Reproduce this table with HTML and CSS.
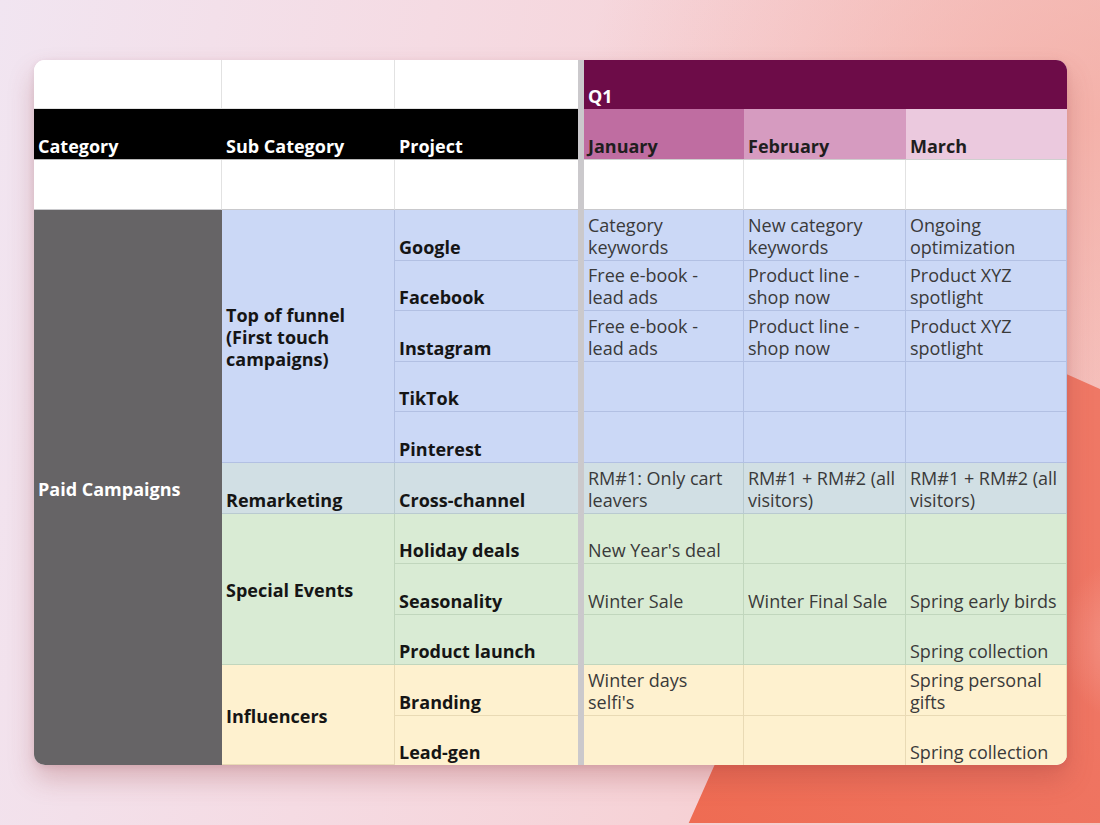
FILE: index.html
```html
<!DOCTYPE html>
<html lang="en">
<head>
<meta charset="utf-8">
<title>Paid Campaigns – Q1 plan</title>
<link rel="stylesheet" href="styles.css">
</head>
<body>
<div class="backdrop"><div class="blob"></div><div class="glow"></div></div>
<main class="stage">
  <div class="sheet">
    <div class="divider"></div>

    <div class="c blank"></div>
    <div class="c blank"></div>
    <div class="c blank edge"></div>
    <div class="c q1">Q1</div>

    <div class="c hd">Category</div>
    <div class="c hd">Sub Category</div>
    <div class="c hd edge">Project</div>
    <div class="c mh jan">January</div>
    <div class="c mh feb">February</div>
    <div class="c mh mar">March</div>

    <div class="c blank gap"></div>
    <div class="c blank gap"></div>
    <div class="c blank gap edge"></div>
    <div class="c blank gap"></div>
    <div class="c blank gap"></div>
    <div class="c blank gap"></div>

    <div class="c cat">Paid Campaigns</div>
    <div class="c sub blue span5">Top of funnel (First touch campaigns)</div>
    <div class="c proj blue edge">Google</div>
    <div class="c txt blue">Category keywords</div>
    <div class="c txt blue">New category keywords</div>
    <div class="c txt blue">Ongoing optimization</div>

    <div class="c proj blue edge">Facebook</div>
    <div class="c txt blue">Free e-book - lead ads</div>
    <div class="c txt blue">Product line - shop now</div>
    <div class="c txt blue">Product XYZ spotlight</div>

    <div class="c proj blue edge">Instagram</div>
    <div class="c txt blue">Free e-book - lead ads</div>
    <div class="c txt blue">Product line - shop now</div>
    <div class="c txt blue">Product XYZ spotlight</div>

    <div class="c proj blue edge">TikTok</div>
    <div class="c txt blue"></div>
    <div class="c txt blue"></div>
    <div class="c txt blue"></div>

    <div class="c proj blue edge">Pinterest</div>
    <div class="c txt blue"></div>
    <div class="c txt blue"></div>
    <div class="c txt blue"></div>

    <div class="c proj cyan">Remarketing</div>
    <div class="c proj cyan edge">Cross-channel</div>
    <div class="c txt cyan">RM#1: Only cart leavers</div>
    <div class="c txt cyan">RM#1 + RM#2 (all visitors)</div>
    <div class="c txt cyan">RM#1 + RM#2 (all visitors)</div>

    <div class="c sub green span3">Special Events</div>
    <div class="c proj green edge">Holiday deals</div>
    <div class="c txt green">New Year's deal</div>
    <div class="c txt green"></div>
    <div class="c txt green"></div>

    <div class="c proj green edge">Seasonality</div>
    <div class="c txt green">Winter Sale</div>
    <div class="c txt green">Winter Final Sale</div>
    <div class="c txt green">Spring early birds</div>

    <div class="c proj green edge">Product launch</div>
    <div class="c txt green"></div>
    <div class="c txt green"></div>
    <div class="c txt green">Spring collection</div>

    <div class="c sub yellow span2">Influencers</div>
    <div class="c proj yellow edge">Branding</div>
    <div class="c txt yellow">Winter days selfi's</div>
    <div class="c txt yellow"></div>
    <div class="c txt yellow">Spring personal gifts</div>

    <div class="c proj yellow edge last">Lead-gen</div>
    <div class="c txt yellow last"></div>
    <div class="c txt yellow last"></div>
    <div class="c txt yellow last">Spring collection</div>
  </div>
</main>
</body>
</html>
```

FILE: styles.css
```css
* { box-sizing: border-box; }

html, body {
  margin: 0;
  padding: 0;
  width: 1100px;
  height: 825px;
  overflow: hidden;
}

body {
  position: relative;
  font-family: "Open Sans", "Noto Sans", "DejaVu Sans", sans-serif;
  background:
    radial-gradient(ellipse 520px 420px at 1100px 120px, rgba(244, 170, 160, 0.75), rgba(244, 170, 160, 0) 100%),
    linear-gradient(100deg, #f1e5f1 0%, #f5dbe3 35%, #f6d2d6 65%, #f5c4c0 100%);
}

.backdrop {
  position: absolute;
  inset: 0 0 2px 0;
  overflow: hidden;
}

.blob {
  position: absolute;
  left: 918px;
  top: 308px;
  width: 900px;
  height: 900px;
  transform-origin: 0 0;
  transform: rotate(24deg);
  border-radius: 120px;
  background: linear-gradient(205deg, #ef7b67 0%, #ef7664 40%, #ee6446 100%);
}

.glow {
  position: absolute;
  left: 1060px;
  top: 560px;
  width: 120px;
  height: 160px;
  border-radius: 50%;
  background: radial-gradient(ellipse at center, rgba(246, 170, 160, 0.55), rgba(246, 170, 160, 0) 70%);
}

.stage {
  position: relative;
  padding: 60px 0 0 34px;
}

.sheet {
  width: 1033px;
  display: grid;
  grid-template-columns: 188px 173px 183px 6px 160px 162px 161px;
  grid-template-rows: 49px 51px 50px 51px 50px 51px 50px 51px 51px 50px 51px 50px 51px 49px;
  border-radius: 11px;
  overflow: hidden;
  background: #fff;
  box-shadow: 0 14px 26px rgba(150, 60, 60, 0.28), 0 2px 6px rgba(120, 60, 80, 0.12);
}

.divider {
  grid-column: 4;
  grid-row: 1 / span 14;
  background: #cbc9cc;
}

.c {
  display: flex;
  align-items: flex-end;
  padding: 0 6px 2px 4px;
  font-size: 18px;
  line-height: 22px;
  color: #3b3b3b;
  border-right: 1px solid rgba(0, 0, 0, 0.09);
  border-bottom: 1px solid rgba(0, 0, 0, 0.09);
  overflow: hidden;
}

.c.edge { border-right: none; }
.c.last { border-bottom: none; }

.blank { background: #fff; border-color: #e2e2e2; }
.blank.gap { border-bottom-color: #c9c9cc; }

.q1 {
  grid-column: 5 / span 3;
  background: #6d0c48;
  color: #fff;
  font-weight: 700;
  border: none;
}

.hd {
  background: #000;
  color: #fff;
  font-weight: 700;
  border-right: none;
  border-bottom: 1px solid #b9b9b9;
}

.mh {
  color: #1e1e1e;
  font-weight: 700;
  border-right: none;
  border-bottom: 1px solid #cfcfcf;
}
.jan { background: #bf6da1; }
.feb { background: #d69bc0; }
.mar { background: #ebc9de; }

.cat {
  grid-row: span 11;
  background: #666466;
  color: #fff;
  font-weight: 700;
  align-items: center;
  padding-top: 2px;
  padding-bottom: 0;
  border: none;
}

.sub {
  align-items: center;
  padding-top: 2px;
  padding-bottom: 0;
  font-weight: 700;
  color: #151515;
}
.span5 { grid-row: span 5; }
.span3 { grid-row: span 3; }
.span2 { grid-row: span 2; }

.proj {
  font-weight: 700;
  color: #151515;
}

.blue { background: #cbd8f6; border-color: rgba(90, 110, 160, 0.22); }
.cyan { background: #d1dfe4; border-color: rgba(90, 120, 130, 0.2); }
.green { background: #d9ebd4; border-color: rgba(100, 130, 100, 0.2); }
.yellow { background: #fef1cf; border-color: rgba(150, 130, 80, 0.2); }

.txt { color: #3a3a3a; }
```
